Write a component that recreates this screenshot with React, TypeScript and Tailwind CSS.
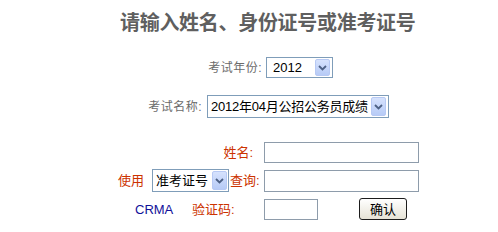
import React from "react";

const cjk = { fontFamily: '"Liberation Sans", "Noto Sans CJK SC", sans-serif' };

function Arrow({ h }: { h: string }) {
  return (
    <div className={`flex w-[15px] shrink-0 ${h} items-center justify-center rounded-[2px] border border-[#b7c9f4] bg-gradient-to-b from-[#d6e2fd] to-[#b7cbf6]`}>
      <svg width="9" height="6" viewBox="0 0 9 6">
        <path d="M1 1 L4.5 4.5 L8 1" fill="none" stroke="#4d6185" strokeWidth="1.8" />
      </svg>
    </div>
  );
}

export default function App() {
  return (
    <div className="relative h-[232px] w-[498px] overflow-hidden bg-white text-black" style={cjk}>
      {/* title */}
      <div className="pl-[120px] pt-[11px] text-[20px] font-bold leading-[24px] tracking-[-0.3px] text-[#5f5f5f]">
        请输入姓名、身份证号或准考证号
      </div>

      {/* year */}
      <div className="mt-[22px] flex h-[21px] items-center">
        <span className="w-[264px] pr-[2px] text-right text-[12px] leading-none tracking-[0.5px] text-[#6b6b6b]">考试年份:</span>
        <div className="ml-[2px] flex h-[21px] w-[67px] items-center justify-between border border-[#7f9db9] bg-white pl-[6px] pr-[2px]">
          <span className="text-[13px] leading-none">2012</span>
          <Arrow h="h-[17px]" />
        </div>
      </div>

      {/* exam name */}
      <div className="mt-[17px] flex h-[23px] items-center">
        <span className="w-[205px] pr-[3px] text-right text-[12px] leading-none tracking-[0.5px] text-[#6b6b6b]">考试名称:</span>
        <div className="ml-[2px] flex h-[23px] w-[182px] items-center justify-between overflow-hidden border border-[#7f9db9] bg-white pl-[3px] pr-[2px]">
          <span className="whitespace-nowrap text-[13px] leading-none tracking-[-0.25px]">2012年04月公招公务员成绩</span>
          <Arrow h="h-[19px]" />
        </div>
      </div>

      {/* name */}
      <div className="mt-[24px] flex h-[21px] items-center">
        <span className="w-[264px] pr-[11px] text-right text-[13px] leading-none text-[#cc3300]">姓名:</span>
        <div className="h-[21px] w-[155px] border border-[#8e9cab] bg-white" />
      </div>

      {/* use */}
      <div className="mt-[6px] flex h-[23px] items-center">
        <span className="ml-[118px] w-[34px] text-[13px] leading-none text-[#cc3300]">使用</span>
        <div className="flex h-[23px] w-[77px] items-center justify-between border border-[#7f9db9] bg-white pl-[3px] pr-[1px]">
          <span className="text-[13px] leading-none">准考证号</span>
          <Arrow h="h-[19px]" />
        </div>
        <span className="ml-[1px] w-[34px] text-[13px] leading-none text-[#cc3300]">查询:</span>
        <div className="h-[22px] w-[155px] border border-[#8e9cab] bg-white" />
      </div>

      {/* captcha */}
      <div className="mt-[6px] flex h-[22px] items-center">
        <span className="ml-[135px] w-[57px] text-[13px] leading-none text-[#11119a]">CRMA</span>
        <span className="w-[72px] text-[13px] leading-none text-[#cc3300]">验证码:</span>
        <div className="h-[21px] w-[54px] border border-[#8e9cab] bg-white" />
        <button className="ml-[41px] flex h-[22px] w-[48px] items-center justify-center rounded-[3px] border border-[#1c1c1c] bg-gradient-to-b from-[#ffffff] to-[#e6e3d6] text-[13px] leading-none text-black">
          确认
        </button>
      </div>
    </div>
  );
}
